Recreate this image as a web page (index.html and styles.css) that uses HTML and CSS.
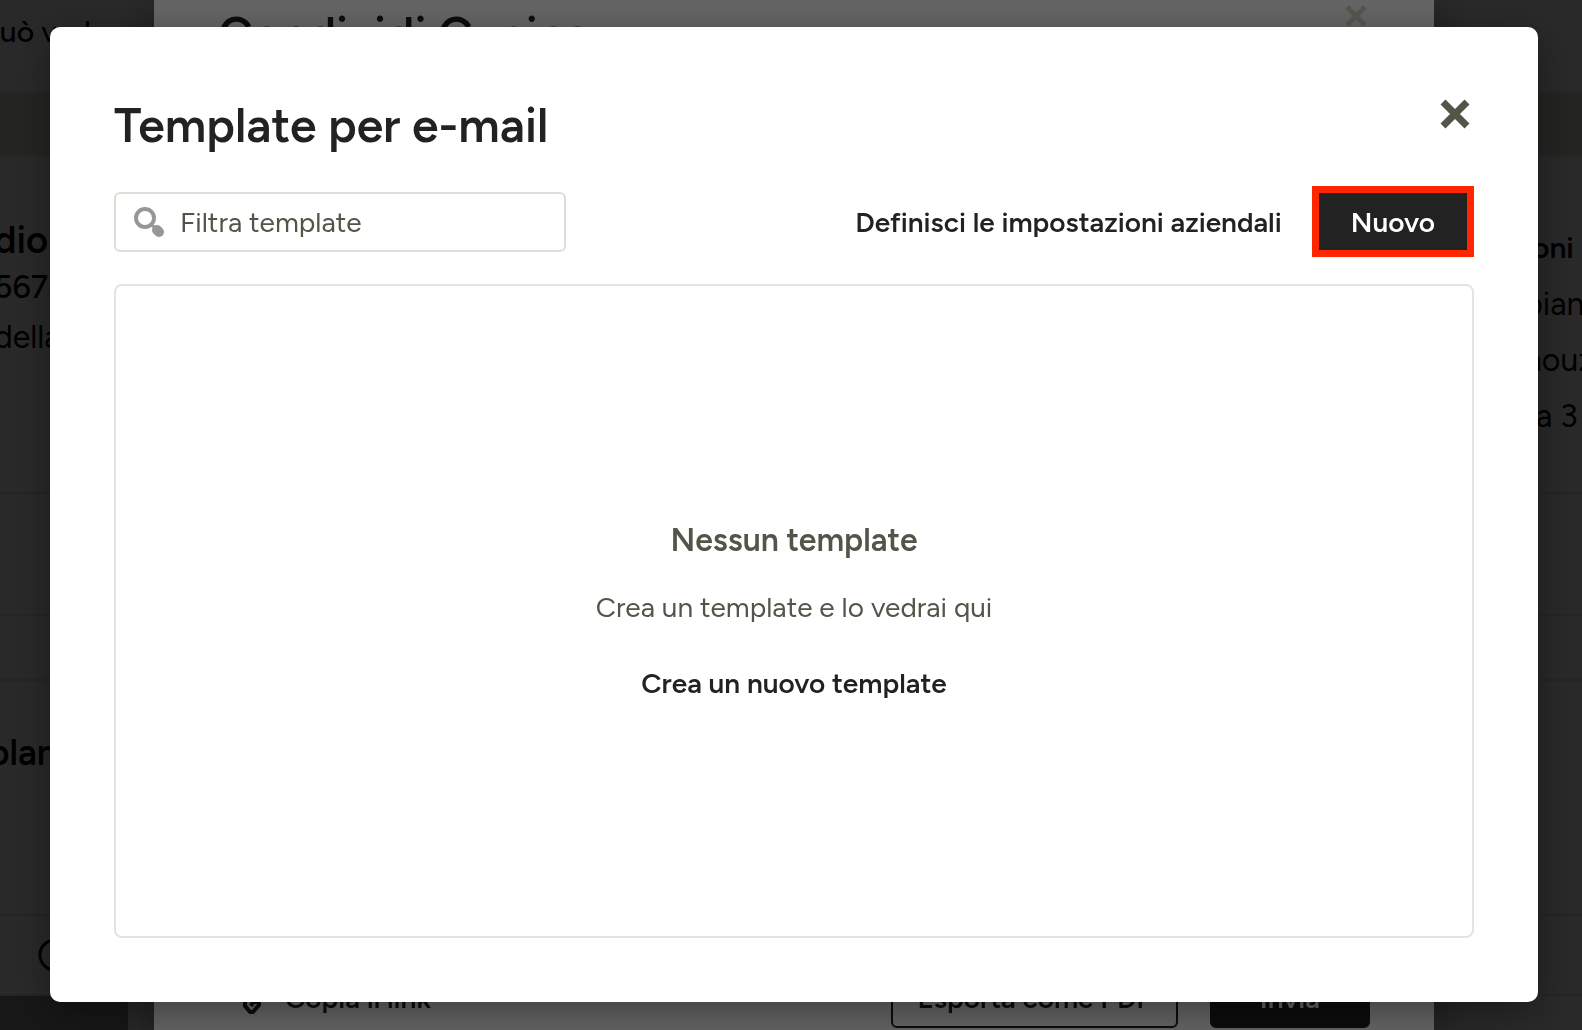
FILE: index.html
```html
<!DOCTYPE html>
<html lang="it">
<head>
    <meta charset="UTF-8">
    <meta name="viewport" content="width=device-width, initial-scale=1.0">
    <title>Template per e-mail</title>
    <link rel="stylesheet" href="styles.css">
</head>
<body>

<!-- Page behind the dialogs -->
<div class="page">
    <div class="page-header"><span>può ved</span></div>
    <div class="page-band"></div>
    <div class="page-main">
        <div class="contact">
            <strong class="contact-name">dio</strong>
            <span class="contact-phone">5678</span>
            <span>della</span>
        </div>
        <div class="details">
            <strong>oni</strong>
            <span>bian</span>
            <span>nouz</span>
            <span>ta 3</span>
        </div>
    </div>
    <div class="page-row tall"></div>
    <div class="page-row"></div>
    <div class="page-plan"><strong>plan</strong></div>
    <div class="page-tools">
        <svg width="36" height="36" viewBox="0 0 36 36" fill="none" stroke="#000" stroke-width="3"><circle cx="18" cy="17" r="15"/></svg>
    </div>
    <div class="page-footer"></div>
</div>

<div class="overlay">
    <div class="share">
        <div class="share-header">
            <h2>Condividi Cucina</h2>
            <button type="button" class="share-close" aria-label="Chiudi">
                <svg width="22" height="22" viewBox="0 0 22 22" stroke="#dcd9c8" stroke-width="5"><path d="M2 2L20 20M20 2L2 20"/></svg>
            </button>
        </div>
        <div class="share-footer">
            <a href="#" class="copy-link">
                <svg width="28" height="32" viewBox="0 0 28 32" fill="none" stroke="#222" stroke-width="4" stroke-linejoin="round"><path d="M10 13l-6 6v5l5 6h3l6-7v-3h-6l-2 4"/><path d="M18 19l6-6a3 3 0 0 0 0-4l-4-4a3 3 0 0 0-4 0l-4 4"/></svg>
                Copia il link
            </a>
            <button type="button" class="share-btn">Esporta come PDF</button>
            <button type="button" class="share-btn dark">Invia</button>
        </div>
    </div>
</div>

<div class="overlay front">
    <div class="modal" role="dialog" aria-labelledby="modalTitle">
        <div class="modal-header">
            <h1 id="modalTitle">Template per e-mail</h1>
            <button type="button" class="close" aria-label="Chiudi">
                <svg width="30" height="30" viewBox="0 0 30 30" stroke="#545449" stroke-width="7"><path d="M3 3L27 27M27 3L3 27"/></svg>
            </button>
        </div>

        <div class="toolbar">
            <div class="search">
                <svg width="32" height="32" viewBox="0 0 32 32" fill="none" stroke="#979797"><circle cx="12" cy="12" r="9" stroke-width="4"/><path d="M18 18l5 5" stroke-width="3"/><path d="M24 24l2 2" stroke-width="10" stroke-linecap="round"/></svg>
                <input type="text" placeholder="Filtra template" aria-label="Filtra template">
            </div>
            <a href="#" class="settings">Definisci le impostazioni aziendali</a>
            <button type="button" class="new-btn">Nuovo</button>
        </div>

        <div class="empty">
            <h3>Nessun template</h3>
            <p>Crea un template e lo vedrai qui</p>
            <a href="#">Crea un nuovo template</a>
        </div>
    </div>
</div>

</body>
</html>
```
FILE: styles.css
```css
* {
    margin: 0;
    padding: 0;
    box-sizing: border-box;
}

body {
    font-family: Figtree, Lato, 'Liberation Sans', sans-serif;
    font-size: 28px;
    line-height: 40px;
    color: #222;
    background: #fff;
    height: 100vh;
    overflow: hidden;
}

button,
input {
    font: inherit;
    color: inherit;
}

button {
    border: none;
    background: none;
    cursor: pointer;
}

a {
    color: #222;
    font-weight: 600;
    text-decoration: none;
}

strong {
    font-weight: 600;
}

svg {
    display: block;
    flex: none;
}

/* Page */
.page {
    height: 100vh;
    display: flex;
    flex-direction: column;
    font-size: 32px;
    color: #000;
    white-space: nowrap;
}

.page > div {
    border-bottom: 2px solid #e4e4dc;
}

.page-header {
    padding: 12px 0 40px;
    font-size: 30px;
    font-weight: 500;
}

.page-header span {
    margin-left: -18px;
}

.page-band {
    height: 62px;
    background: #e0ded2;
}

.page-main {
    height: 338px;
    display: flex;
    justify-content: space-between;
}

.contact {
    display: flex;
    flex-direction: column;
    padding-top: 62px;
    margin-left: -6px;
    line-height: 50px;
}

.contact-name {
    font-size: 38px;
    line-height: 44px;
}

.contact-phone {
    font-weight: 500;
}

.details {
    display: flex;
    flex-direction: column;
    width: 58px;
    padding-top: 64px;
    line-height: 56px;
}

.details strong {
    padding-left: 8px;
    font-size: 30px;
}

.page-row {
    height: 65px;
}

.page-row.tall {
    height: 122px;
}

.page-plan {
    height: 235px;
    padding-top: 52px;
    font-size: 36px;
}

.page-plan strong {
    margin-left: -12px;
}

.page-tools {
    height: 80px;
    padding: 22px 0 0 37px;
}

.page > .page-footer {
    flex: 1;
    width: 128px;
    border: none;
    background: #8a8f8a;
}

/* Overlays */
.overlay {
    position: fixed;
    inset: 0;
    display: flex;
    justify-content: center;
    padding-left: 6px;
    background: rgba(0, 0, 0, 0.6);
}

.overlay.front {
    padding: 27px 44px 28px 50px;
}

/* Share dialog */
.share {
    width: 100%;
    max-width: 1280px;
    display: flex;
    flex-direction: column;
    justify-content: space-between;
    padding: 0 64px 2px;
    background: #fff;
    box-shadow: 0 10px 40px rgba(0, 0, 0, 0.4);
}

.share-header,
.modal-header {
    display: flex;
    justify-content: space-between;
    align-items: flex-start;
}

.share-header h2,
.modal-header h1 {
    font-size: 48px;
    font-weight: 600;
    line-height: 68px;
}

.share-close {
    padding: 5px 3px;
}

.share-footer {
    display: flex;
    align-items: center;
    gap: 32px;
}

.copy-link {
    display: flex;
    align-items: center;
    gap: 16px;
    margin-right: auto;
    padding-left: 23px;
}

.share-btn {
    height: 60px;
    padding: 0 24px;
    border: 2px solid #222;
    border-radius: 6px;
    font-weight: 600;
}

.share-btn.dark {
    padding: 0 48px;
    background: #222;
    color: #fff;
}

/* Template dialog */
.modal {
    flex: 1;
    display: flex;
    flex-direction: column;
    padding: 64px;
    background: #fff;
    border-radius: 10px;
    box-shadow: 0 10px 40px rgba(0, 0, 0, 0.4);
}

.modal-header {
    margin-bottom: 27px;
}

.close {
    padding: 8px 4px;
}

.toolbar {
    display: flex;
    align-items: center;
    margin-bottom: 27px;
}

.search {
    display: flex;
    align-items: center;
    gap: 15px;
    width: 452px;
    height: 60px;
    padding: 0 17px;
    border: 2px solid #deded6;
    border-radius: 6px;
}

.search input {
    flex: 1;
    min-width: 0;
    border: none;
    outline: none;
    background: none;
}

.search input::placeholder {
    color: #545449;
    opacity: 1;
}

.settings {
    margin-left: auto;
}

.new-btn {
    height: 71px;
    margin-left: 30px;
    padding: 0 32px;
    border: 7px solid #ff2600;
    background: #222;
    color: #fff;
    font-weight: 600;
}

.empty {
    flex: 1;
    display: flex;
    flex-direction: column;
    align-items: center;
    justify-content: center;
    border: 2px solid #e4e4dc;
    border-radius: 8px;
    text-align: center;
    color: #545449;
}

.empty h3 {
    font-size: 32px;
    font-weight: 600;
    margin-bottom: 27px;
}

.empty p {
    margin-bottom: 36px;
}
```
